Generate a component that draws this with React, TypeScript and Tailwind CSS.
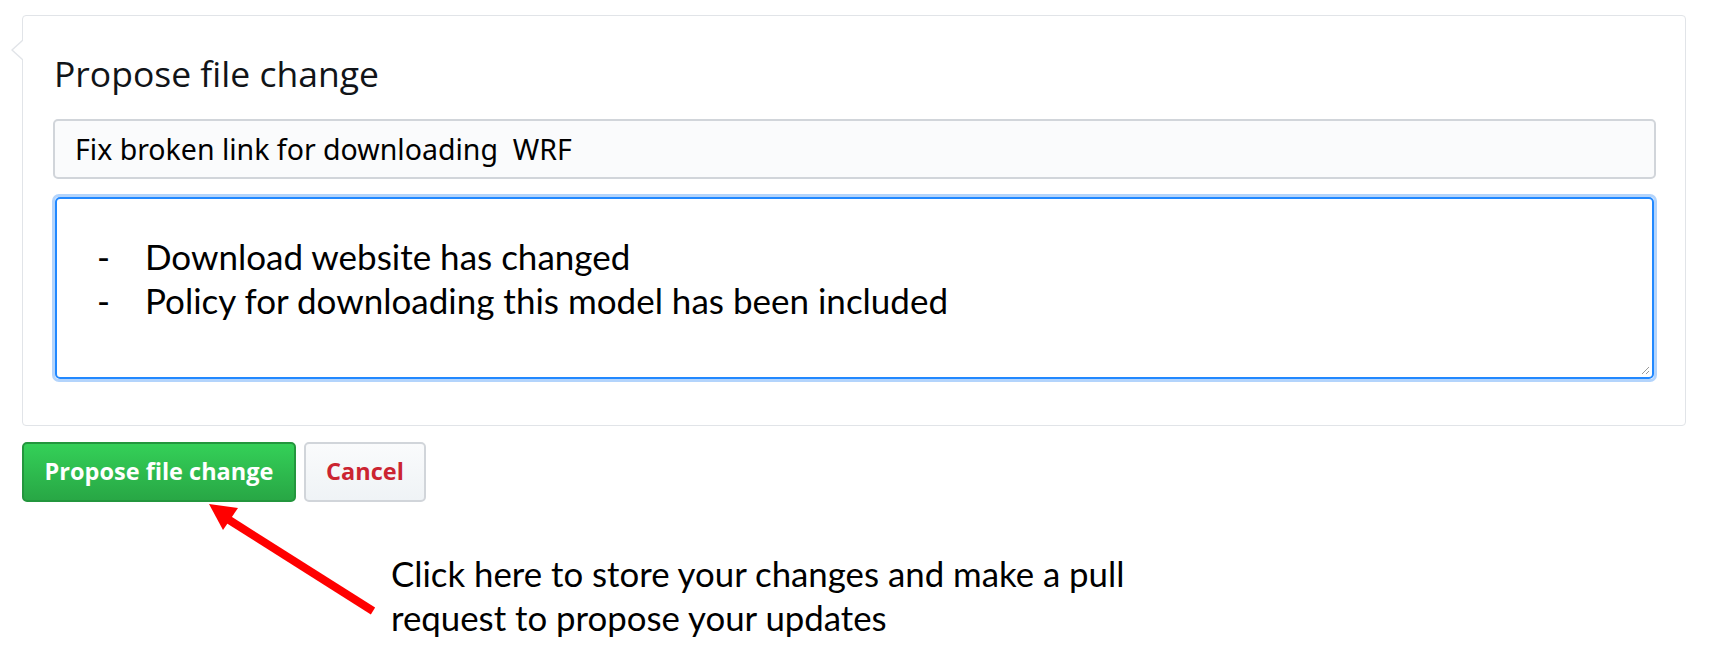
import React from "react";

const ui = { fontFamily: '"Open Sans", "Noto Sans", sans-serif' };
const cal = { fontFamily: 'Lato, "Open Sans", sans-serif' };

export default function App() {
  return (
    <div className="relative w-[1718px] h-[664px] bg-white overflow-hidden" style={ui}>
      {/* form card */}
      <div className="relative ml-[22px] mt-[15px] w-[1664px] h-[411px] border border-[#e1e4e8] rounded-[4px] bg-white px-[30px] pt-[33px]">
        {/* pointer on the left edge */}
        <div className="absolute -left-[12px] top-[23px] w-0 h-0 border-y-[11px] border-y-transparent border-r-[12px] border-r-[#e1e4e8]" />
        <div className="absolute -left-[10px] top-[24px] w-0 h-0 border-y-[10px] border-y-transparent border-r-[11px] border-r-white" />

        <h3 className="pl-[1px] text-[35.5px] leading-[48px] font-medium text-[#111418]">
          Propose file change
        </h3>

        <div className="mt-[22px] h-[60px] w-[1603px] rounded-[5px] border-2 border-[#d1d5da] bg-[#fafbfc] flex items-center pl-[20px]">
          <span className="text-[28.5px] text-black" style={{ fontFamily: '"Noto Sans", "Open Sans", sans-serif' }}>
            Fix broken link for downloading&nbsp; WRF
          </span>
        </div>

        <div className="mt-[15px] w-[1605px] h-[188px] rounded-[7px] border-[3px] border-[#b3d4fc] -ml-[1px]">
          <div className="relative h-full rounded-[5px] border-2 border-[#2188ff] bg-white pt-[35px]" style={cal}>
            <div className="flex text-[35px] leading-[44px] text-black">
              <span className="w-[44px] pl-[40px] mr-[44px]">-</span>
              <span>Download website has changed</span>
            </div>
            <div className="flex text-[35px] leading-[44px] text-black">
              <span className="w-[44px] pl-[40px] mr-[44px]">-</span>
              <span>Policy for downloading this model has been included</span>
            </div>
            <svg className="absolute right-[2px] bottom-[2px]" width="10" height="10" viewBox="0 0 10 10">
              <path d="M9 2 L2 9 M9 6 L6 9" stroke="#9a9a9a" strokeWidth="1" />
            </svg>
          </div>
        </div>
      </div>

      {/* action buttons */}
      <div className="flex gap-[8px] ml-[22px] mt-[16px]">
        <button className="w-[274px] h-[60px] rounded-[5px] border-2 border-[#23963d] bg-gradient-to-b from-[#34d058] to-[#28a745] text-white text-[23.5px] font-bold">
          Propose file change
        </button>
        <button className="w-[122px] h-[60px] rounded-[5px] border-2 border-[#d1d5da] bg-gradient-to-b from-[#fafbfc] to-[#eff3f6] text-[#cb2431] text-[23.5px] font-bold">
          Cancel
        </button>
      </div>

      {/* annotation arrow */}
      <svg className="absolute left-0 top-0" width="1718" height="664" viewBox="0 0 1718 664">
        <line x1="373" y1="611" x2="226" y2="518" stroke="#ff0000" strokeWidth="8" />
        <polygon points="209,504 238,508 223,530" fill="#ff0000" />
      </svg>

      <div className="ml-[391px] mt-[50px] text-[34.8px] leading-[44px] text-black" style={cal}>
        <div>Click here to store your changes and make a pull</div>
        <div>request to propose your updates</div>
      </div>
    </div>
  );
}
